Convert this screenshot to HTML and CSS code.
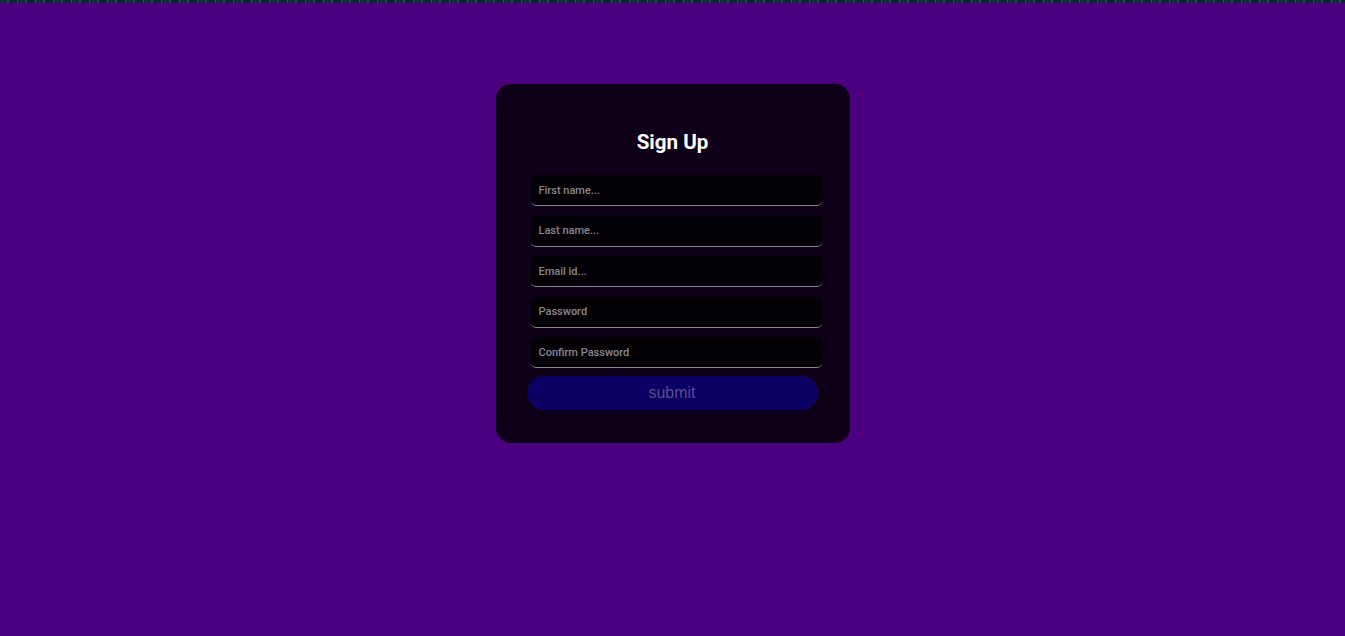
FILE: index.html
```html
<!DOCTYPE html>
<html lang="en">
<head>
<meta charset="utf-8">
<title>Sign Up</title>
<link rel="stylesheet" href="styles.css">
</head>
<body>
<div class="topstrip"></div>
<main class="page">
  <form class="card">
    <h1 class="title">Sign Up</h1>
    <div class="fields">
      <input class="field" type="text" placeholder="First name...">
      <input class="field" type="text" placeholder="Last name...">
      <input class="field" type="email" placeholder="Email id...">
      <input class="field" type="password" placeholder="Password">
      <input class="field" type="password" placeholder="Confirm Password">
    </div>
    <button class="submit" type="button">submit</button>
  </form>
</main>
</body>
</html>
```
FILE: styles.css
```css
* { box-sizing: border-box; }
html, body { margin: 0; padding: 0; }
body {
  background: #4b0080;
  font-family: Roboto, "Liberation Sans", sans-serif;
  min-height: 636px;
}
.topstrip {
  height: 3px;
  background: repeating-linear-gradient(90deg, #0c2f3a 0 7px, #1d4a50 7px 9px, #0a2530 9px 17px, #2a5a5a 17px 18px);
}
.page {
  display: flex;
  justify-content: center;
  padding-top: 81px;
}
.card {
  width: 354px;
  background: #0e0019;
  border-radius: 15px;
  padding: 46px 32px 33px 31px;
  display: flex;
  flex-direction: column;
}
.title {
  margin: 0;
  color: #ffffff;
  font-family: Roboto, "Liberation Sans", sans-serif;
  font-size: 20.6px;
  font-weight: 700;
  line-height: 24px;
  text-align: center;
  padding-left: 1px;
}
.fields {
  display: flex;
  flex-direction: column;
  gap: 9.5px;
  margin-top: 21px;
  margin-left: 4px;
  margin-right: -4px;
}
.field {
  display: block;
  width: 291px;
  height: 31px;
  background: #030006;
  border: none;
  border-bottom: 1px solid #8a8590;
  border-radius: 5px;
  padding: 0 8px;
  color: #cccccc;
  font-family: Roboto, "Liberation Sans", sans-serif;
  font-size: 11px;
  font-weight: 500;
  outline: none;
}
.field::placeholder { color: #8b8690; }
.submit {
  margin-top: 8px;
  width: 291px;
  height: 34px;
  border: none;
  border-radius: 17px;
  background: #0b0063;
  color: #5b4d8c;
  font-family: "Liberation Sans", Arial, sans-serif;
  font-size: 16px;
  cursor: pointer;
}
```
